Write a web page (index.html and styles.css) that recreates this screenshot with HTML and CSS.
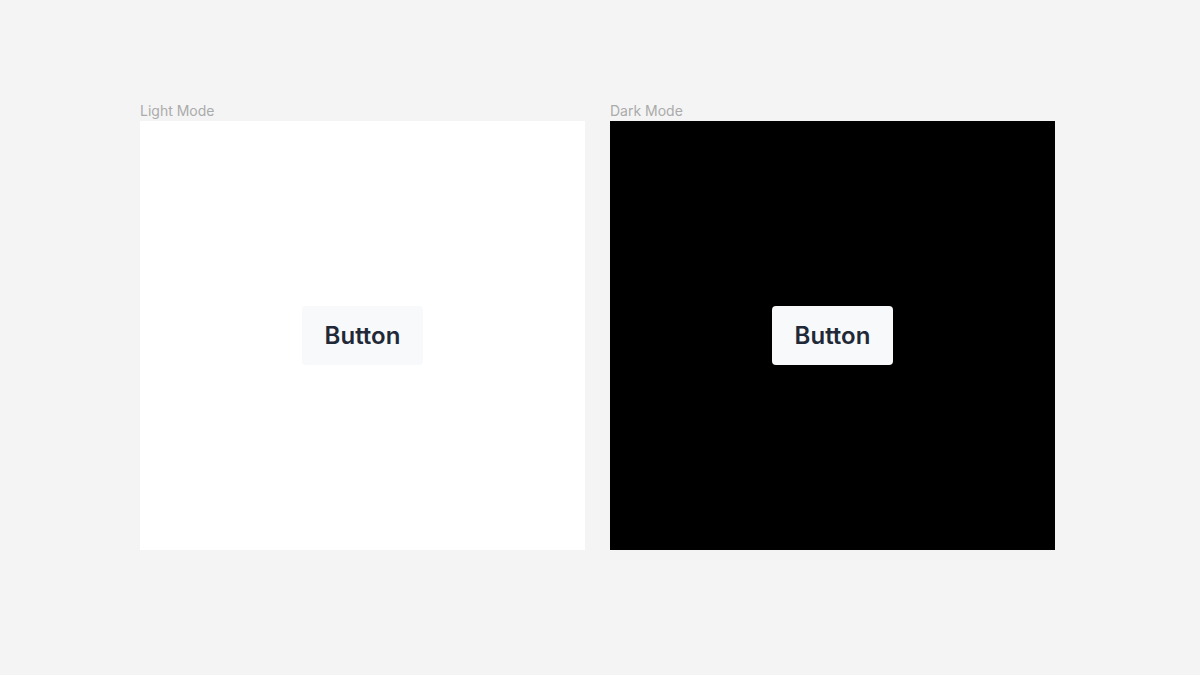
FILE: index.html
```html
<!DOCTYPE html>
<html lang="en">
<head>
  <meta charset="UTF-8" />
  <title>Button Modes</title>
  <link rel="stylesheet" href="styles.css">
</head>
<body>
  <div class="canvas">
    <div class="frame">
      <div class="label">Light Mode</div>
      <div class="panel light">
        <button class="btn">Button</button>
      </div>
    </div>
    <div class="frame">
      <div class="label">Dark Mode</div>
      <div class="panel dark">
        <button class="btn">Button</button>
      </div>
    </div>
  </div>
</body>
</html>
```

FILE: styles.css
```css
body {
  font-family: Inter, 'Noto Sans', sans-serif;
  background: #f4f4f4;
  margin: 0;
  padding: 0;
}

.canvas {
  display: flex;
  gap: 25px;
  padding: 101px 0 0 140px;
}

.frame {
  display: flex;
  flex-direction: column;
}

.label {
  font-size: 14px;
  line-height: 20px;
  color: #ababab;
}

.panel {
  width: 445px;
  height: 429px;
  display: flex;
  align-items: center;
  justify-content: center;
}

.light {
  background: #fff;
}

.dark {
  background: #000;
}

.btn {
  width: 121px;
  height: 59px;
  background: #f8f9fb;
  color: #1f2937;
  border: none;
  border-radius: 4px;
  font-family: Inter, 'Noto Sans', sans-serif;
  font-size: 24px;
  font-weight: 600;
  cursor: pointer;
}
```
